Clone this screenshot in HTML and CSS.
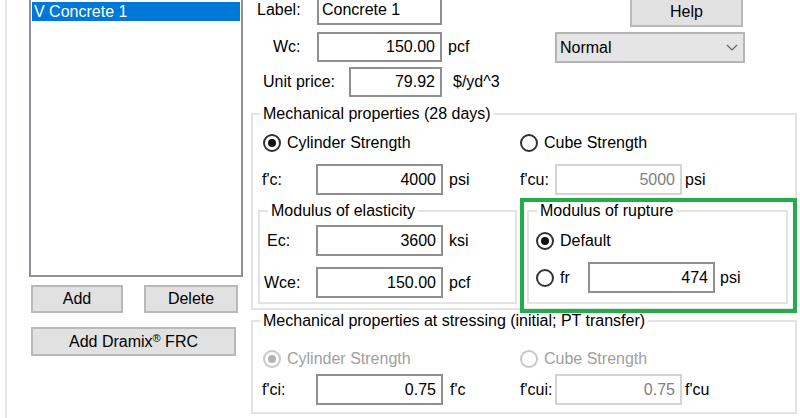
FILE: index.html
```html
<!DOCTYPE html>
<html>
<head>
<meta charset="utf-8">
<link rel="stylesheet" href="styles.css">
</head>
<body>
<div class="window">
  <div class="edge"></div>
  <div class="left">
    <div class="listbox">
      <div class="item sel">V Concrete 1</div>
    </div>
    <div class="btnrow">
      <button class="btn btn-add">Add</button>
      <button class="btn btn-del">Delete</button>
    </div>
    <button class="btn btn-dramix">Add Dramix<span class="reg">®</span> FRC</button>
  </div>
  <div class="right">
    <div class="top">
      <div class="topform">
        <div class="frow r-label"><span class="lbl">Label:</span><div class="tb tb-left">Concrete 1</div></div>
        <div class="frow r-wc"><span class="lbl">Wc:</span><div class="tb">150.00</div><span class="unit">pcf</span></div>
        <div class="frow r-price"><span class="lbl">Unit price:</span><div class="tb">79.92</div><span class="unit">$/yd^3</span></div>
      </div>
      <div class="topside">
        <button class="btn btn-help">Help</button>
        <div class="select"><span>Normal</span><svg class="chev" width="12" height="7" viewBox="0 0 12 7"><polyline points="1,1 6,6 11,1" fill="none" stroke="#606060" stroke-width="1.2"/></svg></div>
      </div>
    </div>

    <fieldset class="gb gb28">
      <legend>Mechanical properties (28 days)</legend>
      <div class="cols main-body">
        <div class="radio checked r-cyl"><span class="circle"></span>Cylinder Strength</div>
        <div class="radio"><span class="circle"></span>Cube Strength</div>

        <div class="field f-row2"><span class="lbl w54">f'c:</span><div class="tb w127">4000</div><span class="unit u6">psi</span></div>
        <div class="field f-row2"><span class="lbl w35">f'cu:</span><div class="tb w127 disabled">5000</div><span class="unit u3">psi</span></div>

        <fieldset class="gb gb-sub gb-elast">
          <legend>Modulus of elasticity</legend>
          <div class="elast-body">
            <div class="field"><span class="lbl w52 pl3">Ec:</span><div class="tb w127">3600</div><span class="unit u6">ksi</span></div>
            <div class="field f-next"><span class="lbl w52">Wce:</span><div class="tb w127">150.00</div><span class="unit u6">pcf</span></div>
          </div>
        </fieldset>

        <div class="hl-host">
          <fieldset class="gb gb-sub gb-rupt">
            <legend>Modulus of rupture</legend>
            <div class="rupt-body">
              <div class="radio checked"><span class="circle"></span>Default</div>
              <div class="field f-next"><div class="radio fr-radio"><span class="circle"></span>fr</div><div class="tb w127">474</div><span class="unit u5">psi</span></div>
            </div>
          </fieldset>
          <div class="hl"></div>
        </div>
      </div>
    </fieldset>

    <fieldset class="gb gbst">
      <legend>Mechanical properties at stressing (initial; PT transfer)</legend>
      <div class="cols st-body">
        <div class="radio checked disabled r-cyl"><span class="circle"></span>Cylinder Strength</div>
        <div class="radio disabled"><span class="circle"></span>Cube Strength</div>

        <div class="field st-row2"><span class="lbl w54">f'ci:</span><div class="tb w127">0.75</div><span class="unit u7">f'c</span></div>
        <div class="field st-row2"><span class="lbl w35">f'cui:</span><div class="tb w127 disabled">0.75</div><span class="unit u3">f'cu</span></div>
      </div>
    </fieldset>
  </div>
</div>
</body>
</html>
```

FILE: styles.css
```css
* { box-sizing: border-box; }
html, body { margin: 0; padding: 0; }
body {
  width: 800px;
  height: 418px;
  overflow: hidden;
  background: #fff;
  font-family: "Liberation Sans", Arial, sans-serif;
  font-size: 16px;
  color: #000;
}
.window { display: flex; height: 418px; }
.edge { width: 2px; margin-left: 5px; background: #e6e6e6; flex: none; }

/* left column */
.left { margin-left: 22px; width: 214px; flex: none; }
.listbox {
  margin-top: -2px;
  height: 279px;
  border: 2px solid #8e9199;
  padding: 2px 1px 0 1px;
  background: #fff;
}
.item { height: 19px; line-height: 19px; padding-left: 2px; white-space: nowrap; }
.item.sel { background: #0078d7; color: #fff; }

.btn {
  font: inherit;
  color: #000;
  background: #e1e1e1;
  border: 2px solid #b9b9b9;
  padding: 0;
  display: block;
}
.btnrow { display: flex; margin-top: 8px; }
.btn-add { margin-left: 2px; width: 92px; height: 28px; }
.btn-del { margin-left: 21px; width: 94px; height: 28px; }
.btn-dramix { margin-top: 14px; margin-left: 2px; width: 205px; height: 29px; }
.reg { font-size: 11px; vertical-align: 5px; }

/* right column */
.right { margin-left: 7px; width: 550px; flex: none; }
.top { display: flex; }
.topform { width: 305px; flex: none; }
.frow { display: flex; align-items: center; height: 30px; }
.lbl { flex: none; white-space: nowrap; }
.unit { white-space: nowrap; }
.tb {
  height: 31px;
  border: 2px solid #8f8f8f;
  background: #fff;
  display: flex;
  align-items: center;
  justify-content: flex-end;
  padding: 0 5px 0 3px;
  flex: none;
}
.frow .tb { height: 30px; }
.tb-left { justify-content: flex-start; }
.tb.disabled { border-color: #d4d4d4; color: #808080; }

.r-label { margin-top: -5px; }
.r-label .lbl { padding-left: 7px; width: 67px; }
.r-label .tb { width: 125px; }
.r-wc { margin-top: 7px; }
.r-wc .lbl { padding-left: 23px; width: 67px; }
.r-wc .tb { width: 125px; }
.r-wc .unit { margin-left: 6px; }
.r-price { margin-top: 5px; }
.r-price .lbl { padding-left: 13px; width: 99px; }
.r-price .tb { width: 93px; }
.r-price .unit { margin-left: 11px; }

.topside { flex: none; }
.btn-help { margin-left: 75px; margin-top: -3px; width: 113px; height: 30px; }
.select {
  margin-top: 5px;
  width: 190px;
  height: 31px;
  background: #e5e5e5;
  border: 2px solid #b5b5b5;
  display: flex;
  align-items: center;
  justify-content: space-between;
  padding: 0 5px 0 3px;
}

/* group boxes */
.gb {
  margin: 0;
  padding: 0;
  border: 2px solid #e3e3e3;
  min-width: 0;
}
.gb legend { padding: 0 3px; line-height: 18px; white-space: nowrap; }
.gb28 { margin: 8px 0 0 1px; width: 546px; }
.gb28 > legend, .gbst > legend { margin-left: 7px; }
.cols { display: grid; grid-template-columns: 258px 270px; }
.main-body { padding: 10px 0 4px 9px; }

.radio { display: flex; align-items: center; height: 20px; white-space: nowrap; }
.radio .circle {
  width: 18px;
  height: 18px;
  border: 2px solid #333;
  border-radius: 50%;
  margin-right: 6px;
  flex: none;
  display: flex;
  align-items: center;
  justify-content: center;
}
.radio.checked .circle::after {
  content: "";
  width: 8px;
  height: 8px;
  border-radius: 50%;
  background: #111;
}
.radio.disabled { color: #a0a0a0; }
.radio.disabled .circle { border-color: #c8c8c8; }
.radio.disabled.checked .circle::after { background: #b4b4b4; }
.r-cyl { margin-left: 1px; }

.field { display: flex; align-items: center; height: 31px; }
.f-row2 { margin-top: 11px; }
.f-next { margin-top: 11px; }
.w54 { width: 54px; }
.w52 { width: 52px; }
.w35 { width: 35px; }
.pl3 { padding-left: 3px; }
.w127 { width: 127px; }
.u3 { margin-left: 3px; }
.u5 { margin-left: 5px; }
.u6 { margin-left: 6px; }
.u7 { margin-left: 7px; }

.gb-sub > legend { margin-left: 8px; }
.gb-elast { margin: 7px 0 0 -4px; width: 259px; }
.elast-body { padding: 5px 0 4px 4px; }

.hl-host { position: relative; margin: 7px 0 0 7px; width: 261px; display: flex; }
.gb-rupt { flex: 1; width: 261px; }
.rupt-body { padding: 11px 0 0 7px; }
.fr-radio { width: 52px; }
.hl {
  position: absolute;
  left: -7px;
  top: -4px;
  width: 277px;
  height: 115px;
  border: 4px solid #22ac4a;
  pointer-events: none;
}

.gbst { margin: 2px 0 0 1px; width: 546px; }
.st-body { padding: 19px 0 7px 9px; }
.st-row2 { margin-top: 5px; }
```
